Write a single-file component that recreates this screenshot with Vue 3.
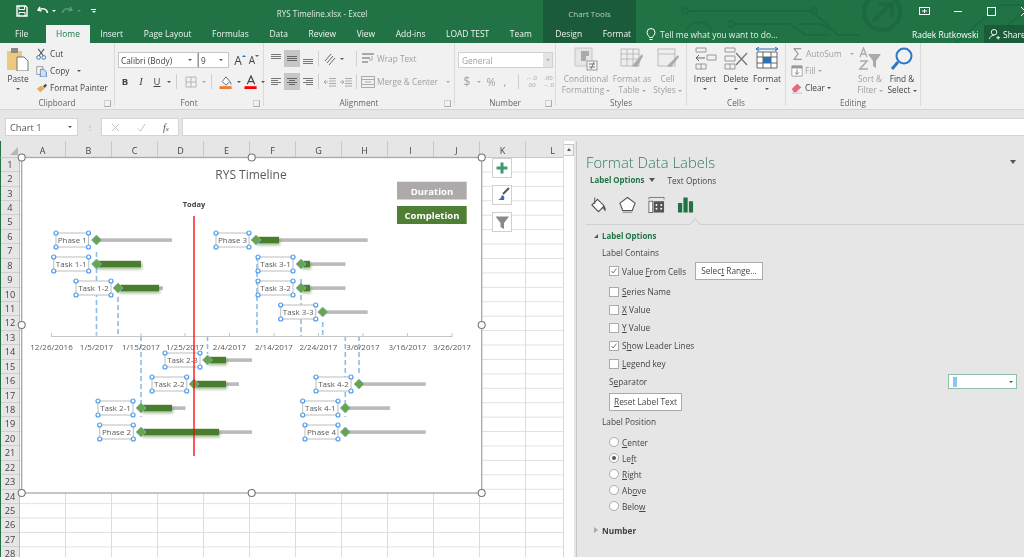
<script setup>
const tabs = ['Insert', 'Page Layout', 'Formulas', 'Data', 'Review', 'View', 'Add-ins', 'LOAD TEST', 'Team']
const rows = Array.from({ length: 28 }, (_, i) => i + 1)
const cols = 'ABCDEFGHIJKL'.split('')
const ticks = [
  [51.5, '12/26/2016'], [96.5, '1/5/2017'], [141, '1/15/2017'], [185, '1/25/2017'], [229.5, '2/4/2017'],
  [274, '2/14/2017'], [318.5, '2/24/2017'], [363, '3/6/2017'], [407.5, '3/16/2017'], [452, '3/26/2017']
]
const items = [
  { t: 'Phase 1', y: 240, l: 56, r: 88.5, d: 96.5, g: 0, e: 172 },
  { t: 'Task 1-1', y: 264, l: 53.7, r: 88.7, d: 96.5, g: 141, e: 141 },
  { t: 'Task 1-2', y: 288, l: 76, r: 111, d: 118, g: 159, e: 163 },
  { t: 'Phase 3', y: 240, l: 216, r: 249, d: 256, g: 279, e: 367.7 },
  { t: 'Task 3-1', y: 264, l: 258, r: 293, d: 301, g: 310, e: 345.5 },
  { t: 'Task 3-2', y: 288, l: 258, r: 293, d: 301, g: 310, e: 345.5 },
  { t: 'Task 3-3', y: 312, l: 280.7, r: 315.7, d: 322.7, g: 0, e: 367.7 },
  { t: 'Task 2-3', y: 360, l: 165, r: 200, d: 207.5, g: 226, e: 252 },
  { t: 'Task 2-2', y: 384, l: 152, r: 186.7, d: 194, g: 226, e: 239 },
  { t: 'Task 2-1', y: 408, l: 98, r: 133, d: 141, g: 172, e: 185.5 },
  { t: 'Phase 2', y: 432, l: 99.7, r: 133.3, d: 141, g: 219, e: 252 },
  { t: 'Task 4-2', y: 384, l: 316, r: 351, d: 359, g: 0, e: 425.7 },
  { t: 'Task 4-1', y: 408, l: 302.7, r: 338, d: 345.3, g: 0, e: 390 },
  { t: 'Phase 4', y: 432, l: 305, r: 338, d: 345.3, g: 0, e: 425.7 }
]
const leaders = [
  [96.5, 252, 336], [118, 297, 336], [141, 336, 417], [207.5, 336, 354], [257, 256, 336],
  [301, 279, 336], [322.7, 322, 336], [345.3, 336, 417], [359, 336, 374]
]
const grips = [[21.7, 157.5], [251.7, 157.5], [481.7, 157.5], [21.7, 325], [481.7, 325], [21.7, 493], [251.7, 493], [481.7, 493]]
const corners = (i) => [[i.l, i.y - 7], [i.r, i.y - 7], [i.l, i.y + 7], [i.r, i.y + 7]]
</script>

<template>
  <div class="app">
    <header class="titlebar">
      <div class="chartband"></div>
      <svg class="circuit" viewBox="0 0 1024 43" aria-hidden="true">
        <g fill="none" stroke="#1d6a41" stroke-width="2">
          <path d="M688 11H812L838 35H860" />
          <circle cx="685" cy="11" r="3" /><circle cx="814" cy="11" r="3" />
          <path d="M686 31a14 14 0 0 1 26 0" />
          <path d="M734 24H790L806 35H830" /><circle cx="731" cy="24" r="3" />
          <path d="M798 24H820L834 31H834" />
          <circle cx="882" cy="12" r="18" stroke-width="4" />
          <path d="M873 21L891 4M879 4H892V17" stroke-width="4" />
          <path d="M955 43L1000 5H1024M985 43L1024 12" />
        </g>
      </svg>
      <div class="qat">
        <svg class="q save" viewBox="0 0 12 12"><path d="M1 1h8.500L11 2.500V11H1z" fill="none" stroke="#fff" stroke-width="1.400" /><path d="M3 1v3.500h5.500V1M3 11V7.500h6V11" fill="none" stroke="#fff" /></svg>
        <svg class="q undo" viewBox="0 0 12 12"><path d="M3 2L1 5l3.500 1M1.500 5C5 2.500 10 3.500 10.500 8" fill="none" stroke="#fff" stroke-width="1.500" /></svg>
        <span class="tri white"></span>
        <svg class="q redo" viewBox="0 0 12 12"><path d="M9 2l2 3-3.500 1M10.500 5C7 2.500 2 3.500 1.500 8" fill="none" stroke="#5c9a79" stroke-width="1.500" /></svg>
        <span class="tri dim"></span>
        <span class="custom"><i></i><span class="tri white"></span></span>
      </div>
      <div class="doc">RYS Timeline.xlsx - Excel</div>
      <div class="charttools">Chart Tools</div>
      <div class="winctl">
        <svg viewBox="0 0 11 9" class="wbox"><rect x=".5" y=".5" width="10" height="7" fill="none" stroke="#fff" /><path d="M3 4h5M5.500 2v4" stroke="#fff" /></svg>
        <span class="min"></span>
        <span class="max"></span>
        <svg viewBox="0 0 9 9" class="cls"><path d="M0 0l9 9M9 0L0 9" stroke="#fff" /></svg>
      </div>
      <nav class="tabs">
        <span class="tab file">File</span>
        <span class="tab home">Home</span>
        <span v-for="t in tabs" :key="t" class="tab">{{ t }}</span>
        <span class="tab design">Design</span>
        <span class="tab">Format</span>
        <svg class="bulb" viewBox="0 0 10 13"><path d="M3.500 9.500C3 7.500 1 7 1 4.500a4 4 0 0 1 8 0C9 7 7 7.500 6.500 9.500zM3.500 11.500h3" fill="none" stroke="#fff" /></svg>
        <span class="tell">Tell me what you want to do...</span>
        <span class="user">Radek Rutkowski</span>
        <span class="share">
          <svg viewBox="0 0 12 12"><circle cx="5.500" cy="3.500" r="3" fill="none" stroke="#fff" /><path d="M.5 11c.5-3 2.500-4 5-4M8 9.500h4M10 7.500v4" fill="none" stroke="#fff" /></svg>
          Share
        </span>
      </nav>
    </header>

    <section class="ribbon">
      <div class="group g-clip">
        <div class="body rowb">
          <div class="big bw36">
            <svg class="bigic" viewBox="0 0 24 24"><rect x="1" y="4" width="15" height="19" fill="#edc87e" /><rect x="5" y="1" width="7" height="5" fill="#8a8a8a" /><path d="M11 10h7l4 4v10H11z" fill="#fff" stroke="#777" /></svg>
            <span class="dk">Paste</span>
            <span class="tri"></span>
          </div>
          <div class="smalls">
            <div class="sm"><svg viewBox="0 0 14 14"><circle cx="3" cy="11" r="2.200" fill="none" stroke="#2b6fb5" /><circle cx="9" cy="11" r="2.200" fill="none" stroke="#2b6fb5" /><path d="M3.500 9L9.500 1M8.500 9L2.500 1" stroke="#555" stroke-width="1.200" /></svg><span class="dk">Cut</span></div>
            <div class="sm"><svg viewBox="0 0 14 14"><path d="M1 2h7v9H1z" fill="#fff" stroke="#888" /><path d="M5 5h4l3 3v6H5z" fill="#cfe0f2" stroke="#4a7fb5" /></svg><span class="dk">Copy</span><span class="tri gapl"></span></div>
            <div class="sm"><svg viewBox="0 0 14 14"><path d="M1 8l5-4 4 4-5 4z" fill="#e4b04a" /><path d="M8 5l3-3 2 2-3 3z" fill="#555" /></svg><span class="dk">Format Painter</span></div>
          </div>
        </div>
        <div class="glabel">Clipboard<i class="launch"></i></div>
      </div>

      <div class="group g-font">
        <div class="body stack">
          <div class="line">
            <div class="sel fname"><span class="dk">Calibri (Body)</span><span class="tri"></span></div>
            <div class="sel fsize"><span class="dk">9</span><span class="tri"></span></div>
            <span class="ib w14 growA">A<sup class="up"></sup></span>
            <span class="ib w14 shrinkA">A<sup class="dn"></sup></span>
          </div>
          <div class="line l2">
            <b class="ib w14 sp2 dk biu">B</b><i class="ib w14 sp2 serif dk">I</i><u class="ib w14 dk biu">U</u>
            <span class="ib w10"><span class="tri"></span></span><span class="sep"></span>
            <span class="ib w16 m2"><svg viewBox="0 0 12 12" class="ic12"><path d="M1 1h10v10H1zM6 1v10M1 6h10" fill="none" stroke="#b6b6b6" /></svg></span>
            <span class="ib w10"><span class="tri dim2"></span></span><span class="sep"></span>
            <span class="ib w16 m2"><svg viewBox="0 0 14 15" class="ic14"><path d="M3 7l4-5 4 5-4 4z" fill="#fff" stroke="#666" /><path d="M11 7c1 1 1.500 2 1.500 3" stroke="#2b6fb5" fill="none" /><rect y="12" width="13" height="3" fill="#ed7d31" /></svg></span>
            <span class="ib w10"><span class="tri"></span></span>
            <span class="ib w14"><svg viewBox="0 0 14 15" class="ic14"><path d="M3 10l4-9 4 9M5 7h4" fill="none" stroke="#444" stroke-width="1.300" /><rect y="12" width="13" height="3" fill="#f00" /></svg></span>
            <span class="ib w10"><span class="tri"></span></span>
          </div>
        </div>
        <div class="glabel">Font<i class="launch"></i></div>
      </div>

      <div class="group g-align">
        <div class="body stack2">
          <div class="line">
            <span class="ib w16"><svg class="ic12" viewBox="0 0 12 12"><path d="M1 1.500h10M1 3.500h10M1 5.500h10" stroke="#777" /></svg></span>
            <span class="ib w16 on"><svg class="ic12" viewBox="0 0 12 12"><path d="M1 3.500h10M1 5.500h10M1 7.500h10" stroke="#666" /></svg></span>
            <span class="ib w16"><svg class="ic12" viewBox="0 0 12 12"><path d="M1 6.500h10M1 8.500h10M1 10.500h10" stroke="#777" /></svg></span>
            <span class="sep"></span>
            <span class="ib w16"><svg class="ic14" viewBox="0 0 14 14"><path d="M2 9l6-7M4 11l6-7M6 13l6-7" stroke="#666" fill="none" /></svg></span>
            <span class="ib w8"><span class="tri"></span></span>
            <span class="sep sp11"></span>
            <svg class="ic14 m3" viewBox="0 0 14 14"><path d="M1 2h12M1 6h8M1 10h6" stroke="#aaa" stroke-width="2" /><path d="M11 4v4H8" stroke="#aaa" fill="none" /></svg>
            <span class="lt">Wrap Text</span>
          </div>
          <div class="line l3">
            <span class="ib w16"><svg class="ic12" viewBox="0 0 12 12"><path d="M1 2.500h10M1 4.500h7M1 6.500h10M1 8.500h7" stroke="#777" /></svg></span>
            <span class="ib w16 on"><svg class="ic12" viewBox="0 0 12 12"><path d="M1 2.500h10M3 4.500h6M1 6.500h10M3 8.500h6" stroke="#666" /></svg></span>
            <span class="ib w16"><svg class="ic12" viewBox="0 0 12 12"><path d="M1 2.500h10M4 4.500h7M1 6.500h10M4 8.500h7" stroke="#777" /></svg></span>
            <span class="sep"></span>
            <span class="ib w16"><svg class="ic12" viewBox="0 0 12 12"><path d="M5 2.500h7M5 5h7M5 7.500h7M5 10h7M4 6H0M2 4L0 6l2 2" stroke="#aaa" fill="none" /></svg></span>
            <span class="ib w16"><svg class="ic12" viewBox="0 0 12 12"><path d="M5 2.500h7M5 5h7M5 7.500h7M5 10h7M0 6h4M2 4l2 2-2 2" stroke="#aaa" fill="none" /></svg></span>
            <span class="sep sp3"></span>
            <svg class="ic14 m3" viewBox="0 0 14 14"><path d="M.5 1.500h13v11H.5zM.5 4.500h13M.5 9.500h13M4 7h6" fill="none" stroke="#aaa" /></svg>
            <span class="lt">Merge &amp; Center</span>
            <span class="tri dim2 gapl2"></span>
          </div>
        </div>
        <div class="glabel">Alignment<i class="launch"></i></div>
      </div>

      <div class="group g-num">
        <div class="body stack3">
          <div class="sel numsel"><span class="lt">General</span><span class="arrowbox"><span class="tri dim2"></span></span></div>
          <div class="line numrow">
            <span class="ib w14 lt big13">$</span><span class="ib w10"><span class="tri dim2"></span></span>
            <span class="ib w14 lt big11">%</span><span class="ib w14 lt big11">,</span>
            <span class="sep sp9"></span>
            <span class="ib w18 lt tiny">←.0<br />.00</span><span class="ib w18 lt tiny">.00<br />→.0</span>
          </div>
        </div>
        <div class="glabel">Number<i class="launch"></i></div>
      </div>

      <div class="group g-styles">
        <div class="body rowb">
          <div class="big bw60">
            <svg class="bigic" viewBox="0 0 24 24"><path d="M1 1h17v18H1z" fill="#e6e6e6" stroke="#c4c4c4" /><path d="M7 4h8v5H7zM7 9h5v5H7z" fill="#aaa" /><rect x="13" y="14" width="10" height="9" fill="#f4f4f4" stroke="#999" /><path d="M15 17h6M15 20h6M20 15l-3 7" stroke="#777" /></svg>
            <span class="lt">Conditional</span><span class="lt">Formatting <span class="tri dim2 inl"></span></span>
          </div>
          <div class="big bw32">
            <svg class="bigic" viewBox="0 0 24 24"><path d="M1 2h18v17H1zM1 7h18M1 12h18M7 2v17M13 2v17" fill="#eee" stroke="#bbb" /><path d="M12 19l10-12 1 2-6 11z" fill="#aaa" /></svg>
            <span class="lt">Format as</span><span class="lt">Table <span class="tri dim2 inl"></span></span>
          </div>
          <div class="big bw39">
            <svg class="bigic" viewBox="0 0 24 24"><rect x="2" y="2" width="17" height="17" fill="#eee" stroke="#bbb" /><path d="M2 7h17" stroke="#bbb" /><path d="M11 19l11-11 1 2-8 10z" fill="#aaa" /></svg>
            <span class="lt">Cell</span><span class="lt">Styles <span class="tri dim2 inl"></span></span>
          </div>
        </div>
        <div class="glabel">Styles</div>
      </div>

      <div class="group g-cells">
        <div class="body rowb">
          <div class="big bw36">
            <svg class="bigic" viewBox="0 0 24 24"><path d="M3 1h10v4H3zM3 17h10v5H3zM8 17v5M14 8h9v5h-9z" fill="none" stroke="#999" /><path d="M3 11h9M6 8l-3 3 3 3" fill="none" stroke="#666" /></svg>
            <span class="dk">Insert</span><span class="tri"></span>
          </div>
          <div class="big bw26">
            <svg class="bigic" viewBox="0 0 24 24"><path d="M1 1h10v4H1zM1 9h10v5H1zM1 17h10v5H1zM6 17v5" fill="none" stroke="#999" /><path d="M12 6l11 12M23 6L12 18" stroke="#777" stroke-width="1.300" /></svg>
            <span class="dk">Delete</span><span class="tri"></span>
          </div>
          <div class="big bw36">
            <svg class="bigic" viewBox="0 0 24 24"><path d="M2 5h20v16H2zM2 10h20M2 16h20M8 5v16M16 5v16" fill="#fff" stroke="#666" /><rect x="8" y="10" width="8" height="6" fill="#2b6fb5" /><path d="M1 2h22M4 0L1 2l3 2M20 0l3 2-3 2" fill="none" stroke="#2b6fb5" /></svg>
            <span class="dk">Format</span><span class="tri"></span>
          </div>
        </div>
        <div class="glabel">Cells</div>
      </div>

      <div class="group g-edit">
        <div class="body rowb">
          <div class="smalls sm-edit">
            <div class="sm"><span class="sigma">Σ</span><span class="lt">AutoSum</span><span class="tri dim2 gapl"></span></div>
            <div class="sm"><svg viewBox="0 0 14 14"><path d="M1 1h12v12H1z" fill="#fff" stroke="#999" /><path d="M1 1h12v3H1z" fill="#999" /><path d="M7 5v6M4.500 8.500L7 11l2.500-2.500" stroke="#777" fill="none" /></svg><span class="lt">Fill</span><span class="tri dim2 inl"></span></div>
            <div class="sm"><svg viewBox="0 0 14 14"><path d="M1 8l6-6 5 4-6 6H3z" fill="#e8697a" /><path d="M1 13h12" stroke="#bbb" /></svg><span class="dk">Clear</span><span class="tri inl"></span></div>
          </div>
          <div class="big bw30">
            <svg class="bigic" viewBox="0 0 24 24"><path d="M10 22H2l7-8H2" fill="none" stroke="#aaa" stroke-width="1.500" /><path d="M2 10l3.500-9L9 10M3 7h5" fill="none" stroke="#aaa" stroke-width="1.300" /><path d="M10 7h13l-5 7v7l-3-2v-5z" fill="#aaa" /></svg>
            <span class="lt">Sort &amp;</span><span class="lt">Filter <span class="tri dim2 inl"></span></span>
          </div>
          <div class="big bw34">
            <svg class="bigic" viewBox="0 0 24 24"><circle cx="14" cy="9" r="7.500" fill="none" stroke="#2b78c5" stroke-width="2" /><path d="M8 15l-6 7" stroke="#2b78c5" stroke-width="3" /></svg>
            <span class="dk">Find &amp;</span><span class="dk">Select <span class="tri inl"></span></span>
          </div>
        </div>
        <div class="glabel">Editing</div>
      </div>
    </section>

    <section class="formula">
      <div class="namebox"><span>Chart 1</span><span class="tri"></span></div>
      <span class="dots">⋮</span>
      <div class="fbtns">
        <svg viewBox="0 0 10 10"><path d="M1 1l8 8M9 1L1 9" stroke="#bbb" /></svg>
        <svg viewBox="0 0 10 10"><path d="M1 6l3 3 5-8" fill="none" stroke="#bbb" /></svg>
        <i>f<small>x</small></i>
      </div>
      <div class="finput"></div>
    </section>

    <main class="main">
      <div class="sheet">
        <div class="colhead">
          <div class="corner"><svg viewBox="0 0 10 10"><path d="M9 1v8H1z" fill="#b6b6b6" /></svg></div>
          <div v-for="c in cols" :key="c" class="col">{{ c }}</div>
        </div>
        <div class="sheetbody">
          <div class="rowhead"><div v-for="r in rows" :key="r" class="rownum">{{ r }}</div></div>
          <div class="cells"></div>
        </div>
        <svg class="chart" viewBox="0 141 563 416">
          <rect x="21.700" y="157.500" width="460" height="335.500" fill="#fff" stroke="#a8a8a8" stroke-width="1.300" />
          <text x="251" y="179" class="ctitle">RYS Timeline</text>
          <text x="194" y="207" class="ctoday">Today</text>
          <line v-for="(l, i) in leaders" :key="'l' + i" :x1="l[0]" :x2="l[0]" :y1="l[1]" :y2="l[2]" class="leader" />
          <path d="M51.500 336.500H452" stroke="#c6c6c6" fill="none" />
          <path v-for="t in ticks" :key="'k' + t[0]" :d="`M${t[0]} 333V337`" stroke="#c6c6c6" />
          <text v-for="t in ticks" :key="'d' + t[0]" :x="t[0]" y="350" class="cdate">{{ t[1] }}</text>

          <g v-for="i in items" :key="i.t">
            <rect :x="i.d" :y="i.y - 1.700" :width="i.e - i.d" height="3.600" fill="#bbb" />
            <rect v-if="i.g" :x="i.d" :y="i.y - 3.200" :width="i.g - i.d" height="6.400" class="gbar" />
            <rect :x="i.l" :y="i.y - 7" :width="i.r - i.l" height="14" fill="#fff" stroke="#bdbdbd" />
            <text :x="(i.l + i.r) / 2" :y="i.y + 3" class="clabel">{{ i.t }}</text>
            <circle v-for="(c, k) in corners(i)" :key="k" :cx="c[0]" :cy="c[1]" r="2" fill="#fff" stroke="#4a9df0" stroke-width="1.200" />
            <path :d="`M${i.d - 5} ${i.y}L${i.d} ${i.y - 5}L${i.d + 5} ${i.y}L${i.d} ${i.y + 5}z`" fill="#69a548" stroke="#7fb4d8" stroke-width=".8" />
          </g>

          <line x1="194" x2="194" y1="216" y2="456" stroke="#f00" stroke-width="1.300" />

          <rect x="397" y="181.700" width="69.700" height="17.800" fill="#aeaaaa" />
          <text x="432" y="194.500" class="clegend">Duration</text>
          <rect x="397" y="206" width="69.700" height="18" fill="#4f7f33" />
          <text x="432" y="219" class="clegend">Completion</text>

          <circle v-for="g in grips" :key="g[0] + '-' + g[1]" :cx="g[0]" :cy="g[1]" r="3.500" fill="#fff" stroke="#777" stroke-width="1.100" />

          <g fill="#fff" stroke="#d0d0d0">
            <rect x="492.500" y="158.500" width="19" height="19" />
            <rect x="492.500" y="185.500" width="19" height="19" />
            <rect x="492.500" y="212.500" width="19" height="19" />
          </g>
          <path d="M502 162.500V173.500M496.500 168H507.500" stroke="#3f9a70" stroke-width="3" />
          <path d="M496 200c4 0 5-2 6-5 2 1 3 2 2 5z" fill="#2b6fb5" /><path d="M503 194l6-6" stroke="#555" stroke-width="2" />
          <path d="M495.500 216.500H509L504 223V229L500.500 227V223z" fill="#8a8a8a" />
        </svg>
      </div>

      <div class="vscroll"><span class="up-btn"><i></i></span></div>

      <aside class="pane">
        <div class="panetop"><h1>Format Data Labels</h1><span class="tri big-tri"></span></div>
        <div class="sub"><b>Label Options</b><span class="tri big-tri"></span><span class="textopt">Text Options</span></div>
        <div class="paneicons">
          <svg viewBox="0 0 18 18"><path d="M8 3l7 7-6 6-7-7z" fill="#fff" stroke="#555" stroke-width="1.200" /><path d="M5 1v7" stroke="#555" /><path d="M15 10c2 2 2 4 1 6-1-2-2-3-3-4z" fill="#555" /></svg>
          <svg viewBox="0 0 18 18"><path d="M9 1l8 6-3 8H4L1 7z" fill="#fff" stroke="#555" stroke-width="1.200" /><path d="M4 17h10" stroke="#999" /></svg>
          <svg viewBox="0 0 18 18"><path d="M1 1h16M1 1v2M17 1v2" stroke="#777" fill="none" /><rect x="1" y="5" width="4" height="12" fill="#fff" stroke="#666" /><rect x="6" y="5" width="11" height="12" fill="#555" /><circle cx="9" cy="9" r="1" fill="#fff" /><circle cx="14" cy="9" r="1" fill="#fff" /><circle cx="9" cy="13" r="1" fill="#fff" /><circle cx="14" cy="13" r="1" fill="#fff" /></svg>
          <svg viewBox="0 0 18 18"><path d="M1 7h4.500v10H1zM6.800 1h4.500v16H6.800zM12.600 5H17v12h-4.400z" fill="#217346" /></svg>
        </div>
        <div class="rule"><span class="notch"></span></div>

        <div class="sechead"><span class="exp"></span><b>Label Options</b></div>
        <div class="lab lab1">Label Contains</div>
        <div class="chk first"><span class="box on"><svg viewBox="0 0 10 10"><path d="M2 5l2 2.500L8 2" fill="none" stroke="#555" /></svg></span><span>Value <u>F</u>rom Cells</span><span class="btn selrange">Selec<u>t</u> Range...</span></div>
        <div class="chk ser"><span class="box"></span><span><u>S</u>eries Name</span></div>
        <div class="chk"><span class="box"></span><span><u>X</u> Value</span></div>
        <div class="chk"><span class="box"></span><span><u>Y</u> Value</span></div>
        <div class="chk"><span class="box on"><svg viewBox="0 0 10 10"><path d="M2 5l2 2.500L8 2" fill="none" stroke="#555" /></svg></span><span>S<u>h</u>ow Leader Lines</span></div>
        <div class="chk"><span class="box"></span><span><u>L</u>egend key</span></div>
        <div class="seprow"><span>S<u>e</u>parator</span><div class="sepbox"><span class="caret"></span><span class="tri"></span></div></div>
        <div class="btn reset"><u>R</u>eset Label Text</div>
        <div class="lab lab2">Label Position</div>
        <div class="radios">
          <div class="rad"><span class="dot"></span><span><u>C</u>enter</span></div>
          <div class="rad"><span class="dot sel-dot"></span><span>Le<u>f</u>t</span></div>
          <div class="rad"><span class="dot"></span><span><u>R</u>ight</span></div>
          <div class="rad"><span class="dot"></span><span>Ab<u>o</u>ve</span></div>
          <div class="rad"><span class="dot"></span><span>Belo<u>w</u></span></div>
        </div>
        <div class="sechead num"><span class="col-tri"></span><b>Number</b></div>
      </aside>
    </main>
  </div>
</template>

<style>
html, body { margin: 0; background: #fff; overflow: hidden; }
</style>

<style scoped>
.app { width: 1024px; height: 557px; overflow: hidden; display: flex; flex-direction: column; font-family: "Open Sans", "Noto Sans", sans-serif; font-size: 8.300px; color: #444; filter: blur(.3px); background: #e6e6e6; }
.tri { display: inline-block; width: 0; height: 0; border-left: 2.500px solid transparent; border-right: 2.500px solid transparent; border-top: 2.500px solid #555; flex: none; }
.tri.white { border-top-color: #fff; }
.tri.dim { border-top-color: #5c9a79; }
.tri.dim2 { border-top-color: #aaa; }
.tri.inl { vertical-align: middle; margin-left: 0; }

.titlebar { position: relative; height: 43px; background: #217346; color: #fff; flex: none; display: flex; flex-direction: column; justify-content: flex-end; }
.chartband { position: absolute; left: 543px; top: 0; width: 93px; height: 43px; background: #1a5c39; }
.circuit { position: absolute; inset: 0; width: 1024px; height: 43px; }
.qat { position: absolute; left: 16px; top: 5px; display: flex; align-items: center; }
.q { width: 12px; height: 12px; }
.undo { margin-left: 9px; }
.undo + .tri { margin-left: 3px; }
.redo { margin-left: 5px; }
.redo + .tri { margin-left: 4px; }
.custom { margin-left: 10px; display: flex; flex-direction: column; align-items: center; gap: 1px; }
.custom i { width: 5px; height: 1px; background: #fff; }
.doc { position: absolute; left: 243px; width: 158px; top: 8px; text-align: center; color: #dbe9e1; font-size: 8.100px; }
.charttools { position: absolute; left: 543px; width: 93px; top: 8px; text-align: center; color: #b7cfc1; font-size: 8px; }
.winctl { position: absolute; left: 0; top: 0; width: 100%; height: 22px; }
.wbox { position: absolute; left: 919px; top: 7px; width: 11px; height: 9px; }
.min { position: absolute; left: 954px; top: 11px; width: 8px; height: 1px; background: #fff; }
.max { position: absolute; left: 987px; top: 7px; width: 7px; height: 7px; border: 1px solid #fff; }
.cls { position: absolute; left: 1021px; top: 7px; width: 9px; height: 9px; }
.tabs { position: relative; height: 18px; display: flex; align-items: center; font-size: 8.450px; }
.tab { padding: 0 10.300px; line-height: 18px; white-space: nowrap; color: #eef5f1; }
.file { padding-left: 15px; padding-right: 17px; width: 46px; box-sizing: border-box; }
.home { background: #f1f1f1; color: #217346; width: 44px; box-sizing: border-box; text-align: center; padding: 0; height: 18px; }
.design { margin-left: 3px; }
.bulb { position: absolute; left: 646px; top: 3px; width: 10px; height: 13px; }
.tell { position: absolute; left: 660px; color: #e6f0ea; }
.user { position: absolute; left: 912px; }
.share { position: absolute; left: 984px; top: 0; width: 40px; height: 18px; background: #1a5c39; display: flex; align-items: center; gap: 3px; padding-left: 5px; box-sizing: border-box; overflow: hidden; }
.share svg { width: 11px; height: 11px; flex: none; }

.ribbon { height: 66px; flex: none; display: flex; background: #f1f1f1; border-bottom: 1px solid #d4d4d4; }
.group { position: relative; display: flex; flex-direction: column; box-sizing: border-box; border-right: 1px solid #dadada; height: 63px; }
.body { height: 54px; flex: none; box-sizing: border-box; }
.glabel { position: relative; text-align: center; line-height: 12px; color: #666; font-size: 8.200px; }
.launch { position: absolute; right: 3px; top: 3px; width: 5px; height: 5px; border: 1px solid #aaa; border-top-color: #d0d0d0; border-left-color: #d0d0d0; }
.g-clip { width: 115px; } .g-font { width: 149px; } .g-align { width: 191px; } .g-num { width: 101px; } .g-styles { width: 131px; } .g-cells { width: 99px; } .g-edit { width: 135px; }
.rowb { display: flex; }
.dk { color: #444; } .lt { color: #a0a0a0; }
.big { display: flex; flex-direction: column; align-items: center; line-height: 11.500px; white-space: nowrap; padding-top: 4px; flex: none; }
.big > .tri { margin-top: 4px; }
.bigic { width: 24px; height: 24px; margin-bottom: 1.500px; flex: none; }
.bw36 { width: 36px; } .bw60 { width: 60px; } .bw32 { width: 32px; } .bw39 { width: 39px; } .bw26 { width: 26px; } .bw30 { width: 30px; } .bw34 { width: 34px; }
.smalls { padding-top: 2px; display: flex; flex-direction: column; }
.sm { height: 17px; display: flex; align-items: center; gap: 2px; white-space: nowrap; }
.sm svg { width: 12px; height: 12px; flex: none; }
.gapl { margin-left: 6px; }
.gapl2 { margin-left: 8px; }
.sm-edit { width: 69px; padding-left: 5px; box-sizing: border-box; flex: none; }
.sigma { width: 13px; text-align: center; font-size: 16px; line-height: 14px; color: #999; }

.stack { padding: 9px 0 0 3px; }
.line { display: flex; align-items: center; height: 16px; }
.l2 { margin-top: 5px; height: 17px; }
.sel { height: 16px; box-sizing: border-box; background: #fff; border: 1px solid #c6c6c6; display: flex; align-items: center; justify-content: space-between; padding: 0 5px 0 2px; }
.fname { width: 80px; } .fsize { width: 31px; margin-left: 0; border-left: 1px solid #999; }
.ib { display: inline-flex; align-items: center; justify-content: center; height: 17px; flex: none; }
.w8 { width: 8px; } .w10 { width: 10px; } .w14 { width: 14px; } .w16 { width: 16px; } .w18 { width: 17px; }
.sp2 { margin-right: 2px; }
.biu { font-size: 9.500px; }
.m2 { margin-left: 3px; } .m3 { margin-left: 4px; margin-right: 2px; flex: none; }
.serif { font-family: "Liberation Serif", serif; font-size: 10.500px; }
.growA { margin-left: 4px; font-size: 12px; color: #444; }
.shrinkA { font-size: 10px; color: #444; }
.up, .dn { width: 0; height: 0; border-left: 2px solid transparent; border-right: 2px solid transparent; margin-top: -8px; }
.up { border-bottom: 2px solid #2b6fb5; } .dn { border-top: 2px solid #2b6fb5; }
.sep { width: 1px; height: 15px; background: #d0d0d0; flex: none; margin: 0 3px 0 2px; }
.ic12 { width: 12px; height: 12px; } .ic14 { width: 14px; height: 14px; }
.on { background: #c6c6c6; }
.stack2 { padding: 7px 0 0 4px; }
.stack2 .line { height: 17px; }
.l3 { margin-top: 6px; }
.sp11 { margin-left: 10px; margin-right: 0; }
.sp3 { margin-left: 2px; margin-right: 0; }
.stack3 { padding: 9px 0 0 3px; }
.numsel { width: 95px; padding: 0 0 0 3px; border-color: #d0d0d0; }
.arrowbox { width: 9px; height: 14px; background: #e4e4e4; display: flex; align-items: center; justify-content: center; }
.numrow { margin-top: 5px; height: 17px; padding-left: 2px; }
.big13 { font-size: 12px; } .big11 { font-size: 11px; }
.sp9 { margin-left: 6px; margin-right: 4px; }
.tiny { font-size: 6px; line-height: 6.500px; text-align: center; }

.formula { height: 31px; flex: none; box-sizing: border-box; background: #e6e6e6; padding: 8px 0 5px 5px; display: flex; }
.namebox { width: 73px; box-sizing: border-box; background: #fff; border: 1px solid #d4d4d4; display: flex; align-items: center; justify-content: space-between; padding: 0 5px 0 4px; font-size: 9.300px; color: #555; }
.dots { width: 23px; text-align: center; color: #aaa; line-height: 18px; }
.fbtns { width: 78px; box-sizing: border-box; background: #fff; border: 1px solid #d4d4d4; display: flex; align-items: center; gap: 17px; padding-left: 9px; }
.fbtns svg { width: 9px; height: 9px; flex: none; }
.fbtns i { font-family: "Liberation Serif", serif; color: #555; font-size: 10px; }
.fbtns small { font-size: 7px; }
.finput { flex: 1; margin-left: 3px; background: #fff; border: 1px solid #d4d4d4; border-right: 0; }

.main { flex: 1; display: flex; min-height: 0; }
.sheet { position: relative; width: 563px; flex: none; overflow: hidden; background: #fff; }
.colhead { height: 16.800px; display: flex; background: #e6e6e6; box-sizing: border-box; border-bottom: 1px solid #c8c8c8; border-left: 1px solid #217346; }
.corner { width: 19px; flex: none; display: flex; align-items: flex-end; justify-content: flex-end; padding: 0 1px 1px 0; box-sizing: border-box; }
.corner svg { width: 10px; height: 10px; }
.col { width: 46px; flex: none; box-sizing: border-box; border-right: 1px solid #c8c8c8; text-align: center; line-height: 19px; font-size: 9px; color: #444; }
.col:last-child { width: 35px; text-align: right; padding-right: 6px; border: 0; }
.sheetbody { display: flex; }
.rowhead { width: 20px; flex: none; box-sizing: border-box; background: #e6e6e6; border-left: 1px solid #217346; border-right: 1px solid #bdbdbd; }
.rownum { height: 14.430px; box-sizing: border-box; border-bottom: 1px solid #cfcfcf; text-align: center; line-height: 14px; font-size: 9.200px; color: #444; }
.cells { flex: 1; height: 400px; background-color: #fff; background-image: linear-gradient(to left, #dcdcdc 1px, transparent 1px), linear-gradient(to top, #e0e0e0 1px, transparent 1px); background-size: 46px 14.430px; }
.chart { position: absolute; left: 0; top: 0; width: 563px; height: 416px; }
.ctitle { font-size: 12px; fill: #595959; text-anchor: middle; }
.ctoday { font-size: 7.500px; font-weight: 700; fill: #404040; text-anchor: middle; }
.cdate { font-size: 8px; fill: #595959; text-anchor: middle; }
.clabel { font-size: 8px; fill: #595959; text-anchor: middle; }
.clegend { font-size: 9.500px; font-weight: 700; fill: #fff; text-anchor: middle; }
.leader { stroke: #8fbde3; stroke-width: 1.600; stroke-dasharray: 5 3; }
.gbar { fill: #4b7d2f; filter: drop-shadow(1px 2px 1.500px rgba(75, 125, 47, .55)); }

.vscroll { width: 13px; flex: none; box-sizing: border-box; background: #fff; border-right: 2px solid #e6e6e6; border-left: 1px solid #d8d8d8; padding-top: 3px; }
.up-btn { display: block; height: 10px; background: #f4f4f4; border: 1px solid #c6c6c6; border-width: 1px 1px 1px 0; position: relative; }
.up-btn i { position: absolute; left: 3px; top: 3px; width: 0; height: 0; border-left: 2.500px solid transparent; border-right: 2.500px solid transparent; border-bottom: 3px solid #555; }

.pane { flex: 1; box-sizing: border-box; border-left: 1px solid #c6c6c6; background: #e6e6e6; padding: 11px 8px 0 9px; font-size: 8.300px; color: #444; display: flex; flex-direction: column; }
.panetop { display: flex; align-items: center; justify-content: space-between; height: 20px; }
.panetop h1 { margin: 0; font-size: 14.800px; font-weight: 300; color: #2f7f58; line-height: 20px; }
.big-tri { border-left-width: 3.500px; border-right-width: 3.500px; border-top-width: 4px; }
.sub { display: flex; align-items: center; height: 14px; margin: 1px 0 0 4px; }
.sub b { color: #217346; font-size: 7.900px; font-weight: 700; }
.sub .tri { margin: 0 12px 0 5px; }
.textopt { font-size: 8.200px; }
.paneicons { display: flex; margin: 9px 0 0 4px; gap: 12px; }
.paneicons svg { width: 17px; height: 18px; flex: none; }
.rule { position: relative; height: 1px; background: #cfcfcf; margin: 10px -8px 0 0; }
.notch { position: absolute; left: 105px; top: -4px; width: 7px; height: 7px; background: #e6e6e6; border-left: 1px solid #cfcfcf; border-top: 1px solid #cfcfcf; transform: rotate(45deg); }
.sechead { display: flex; align-items: center; height: 14px; margin-top: 4px; padding-left: 8px; }
.sechead b { margin-left: 4px; color: #217346; font-size: 7.900px; }
.exp { width: 0; height: 0; border-bottom: 4px solid #555; border-left: 4px solid transparent; }
.lab { padding-left: 16px; height: 14px; line-height: 14px; }
.lab1 { margin-top: 3px; }
.chk { height: 18px; display: flex; align-items: center; padding-left: 23px; }
.chk.first { margin-top: 2px; height: 18px; }
.chk.ser { margin-top: 2.500px; }
.box { width: 10px; height: 10px; box-sizing: border-box; background: #fff; border: 1px solid #ababab; margin-right: 3px; flex: none; display: flex; }
.box svg { width: 8px; height: 8px; }
.btn { box-sizing: border-box; background: #fff; border: 1px solid #ababab; text-align: center; height: 18px; line-height: 16px; white-space: nowrap; }
.selrange { width: 68px; margin-left: auto; margin-right: 253px; }
.seprow { height: 18px; display: flex; align-items: center; justify-content: space-between; padding-left: 23px; margin-top: 0; }
.sepbox { width: 69px; height: 15px; box-sizing: border-box; background: #fff; border: 1px solid #8fbfa5; display: flex; align-items: center; justify-content: space-between; padding: 0 3px 0 4px; margin-right: -1px; }
.caret { width: 4px; height: 10px; background: #8fc5f5; }
.reset { width: 73px; margin: 2px 0 0 23px; }
.lab2 { margin-top: 4px; }
.radios { margin-top: 5.500px; }
.rad { height: 16px; display: flex; align-items: center; padding-left: 23px; }
.dot { width: 10px; height: 10px; box-sizing: border-box; border-radius: 50%; background: #fff; border: 1px solid #ababab; margin-right: 3px; flex: none; position: relative; }
.sel-dot::after { content: ""; position: absolute; left: 2px; top: 2px; width: 4px; height: 4px; border-radius: 50%; background: #555; }
.num { margin-top: 9px; }
.num b { color: #444; margin-left: 4px; font-size: 8.300px; }
.col-tri { width: 0; height: 0; border-left: 4px solid #aaa; border-top: 3.500px solid transparent; border-bottom: 3.500px solid transparent; }
</style>
